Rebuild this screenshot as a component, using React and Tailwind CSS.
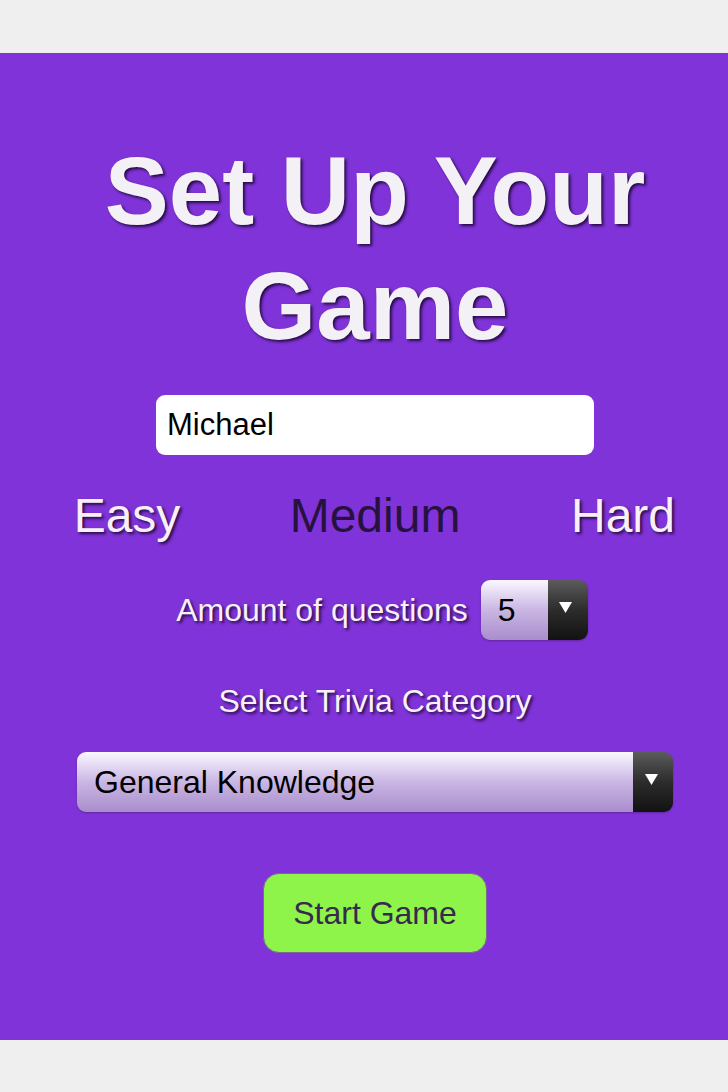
import React, { useState } from "react";

const font = "font-['Liberation_Sans',Arial,Helvetica,sans-serif]";
const lightShadow = "[text-shadow:2px_2px_3px_rgba(15,0,35,0.8)]";

function FakeSelect({ value, className }) {
  return (
    <div
      className={`flex h-[60px] rounded-[9px] overflow-hidden shadow-[0_1px_2px_rgba(0,0,0,0.25)] ${className}`}
    >
      <div className="flex-1 flex items-center pl-[17px] bg-gradient-to-b from-[#fbf8ff] via-[#c9b6e3] to-[#a98dcc] text-[32px] text-black">
        {value}
      </div>
      <div className="w-[40px] flex justify-center pt-[22px] bg-gradient-to-b from-[#5c5c5c] via-[#2c2c2c] to-[#121212]">
        <svg width="13" height="11" viewBox="0 0 13 11" className="-ml-[4px]">
          <polygon points="0,0 13,0 6.5,11" fill="#ffffff" />
        </svg>
      </div>
    </div>
  );
}

export default function App() {
  const [name, setName] = useState("Michael");

  return (
    <div className={`min-h-screen bg-[#efefef] pt-[53px] overflow-hidden ${font}`}>
      <div className="h-[987px] bg-[#8033d8] pl-[22px] flex flex-col items-center">
        <h1
          className={`mt-[80px] text-[96px] leading-[115px] font-bold text-center text-[#f4f1f6] ${lightShadow}`}
        >
          Set Up Your
          <br />
          Game
        </h1>

        <input
          type="text"
          value={name}
          onChange={(e) => setName(e.target.value)}
          className="mt-[32px] w-[438px] h-[60px] rounded-[9px] bg-white px-[11px] text-[31px] text-black outline-none"
        />

        {/* difficulty */}
        <div className="mt-[34px] flex justify-center text-[48px] leading-[54px]">
          <span className={`w-[248px] shrink-0 text-center text-[#f8eff9] ${lightShadow}`}>
            Easy
          </span>
          <span className="w-[248px] shrink-0 text-center text-[#27123f]">
            Medium
          </span>
          <span className={`w-[248px] shrink-0 text-center text-[#f8eff9] ${lightShadow}`}>
            Hard
          </span>
        </div>

        <div className="mt-[37px] pl-[14px] flex items-center gap-[13px]">
          <span className={`text-[32px] leading-[37px] text-[#f8f0fa] ${lightShadow}`}>
            Amount of questions
          </span>
          <FakeSelect value="5" className="w-[107px]" />
        </div>

        <p className={`mt-[43px] text-[32px] leading-[37px] text-[#f8f0fa] ${lightShadow}`}>
          Select Trivia Category
        </p>

        <FakeSelect value="General Knowledge" className="mt-[32px] w-[596px]" />

        <button className="mt-[61px] w-[224px] h-[80px] rounded-[16px] bg-[#8ef44a] border border-[#7a6a92] text-[32px] text-[#372a4c]">
          Start Game
        </button>
      </div>
    </div>
  );
}
